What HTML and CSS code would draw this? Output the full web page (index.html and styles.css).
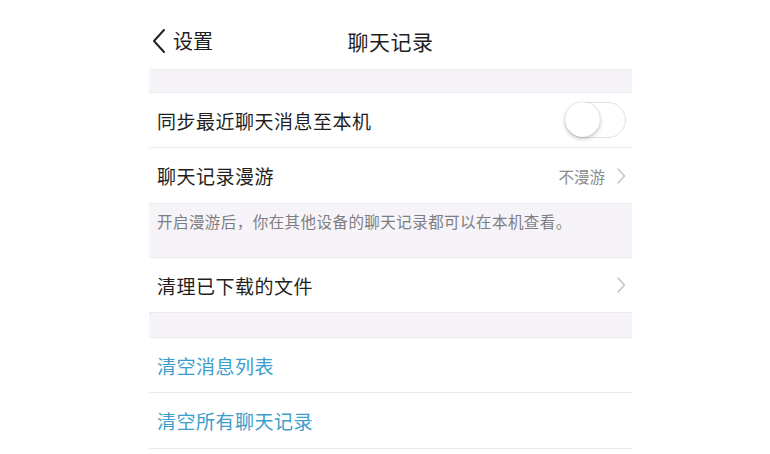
FILE: index.html
```html
<!DOCTYPE html>
<html lang="zh">
<head>
<meta charset="utf-8">
<link rel="stylesheet" href="styles.css">
</head>
<body>
<div class="panel">
  <header class="nav">
    <div class="back">
      <svg class="back-icon" width="14" height="26" viewBox="0 0 14 26"><path d="M12 2 L2 13 L12 24" fill="none" stroke="#222" stroke-width="2" stroke-linecap="round" stroke-linejoin="round"/></svg>
      <span>设置</span>
    </div>
    <div class="title">聊天记录</div>
  </header>
  <div class="gap"></div>
  <div class="group">
    <div class="row"><span class="label">同步最近聊天消息至本机</span><span class="toggle"><span class="knob"></span></span></div>
    <div class="row tall"><span class="label">聊天记录漫游</span><span class="value">不漫游</span><svg class="chev" width="10" height="18" viewBox="0 0 10 18"><path d="M2 2 L8.5 9 L2 16" fill="none" stroke="#c4c4c8" stroke-width="1.6" stroke-linecap="round" stroke-linejoin="round"/></svg></div>
  </div>
  <div class="note">开启漫游后，你在其他设备的聊天记录都可以在本机查看。</div>
  <div class="group">
    <div class="row"><span class="label">清理已下载的文件</span><svg class="chev" width="10" height="18" viewBox="0 0 10 18"><path d="M2 2 L8.5 9 L2 16" fill="none" stroke="#c4c4c8" stroke-width="1.6" stroke-linecap="round" stroke-linejoin="round"/></svg></div>
  </div>
  <div class="gap gap2"></div>
  <div class="group">
    <div class="row"><span class="label blue">清空消息列表</span></div>
    <div class="row tall"><span class="label blue">清空所有聊天记录</span></div>
  </div>
</div>
</body>
</html>
```
FILE: styles.css
```css
html, body {
  margin: 0;
  padding: 0;
  background: #ffffff;
}
body {
  font-family: "Noto Sans CJK SC", "Noto Sans", sans-serif;
  color: #1f1f1f;
}
.panel {
  width: 483px;
  margin-left: 149px;
}
.nav {
  position: relative;
  height: 69px;
  display: flex;
  align-items: center;
  justify-content: center;
  background: #fff;
}
.back {
  position: absolute;
  left: 3px;
  top: 27px;
  display: flex;
  align-items: center;
  gap: 7px;
  font-size: 20px;
  line-height: 28px;
}
.back-icon {
  display: block;
}
.title {
  font-size: 21px;
  line-height: 28px;
  margin-top: 13px;
  letter-spacing: 0.5px;
}
.gap {
  height: 24px;
  box-sizing: border-box;
  background: #f7f4f9;
  border-top: 1px solid #f1ecf4;
  border-bottom: 1px solid #ece8f0;
}
.gap2 {
  height: 25px;
  border-top: none;
}
.group {
  background: #fff;
}
.row {
  height: 55px;
  display: flex;
  align-items: center;
  padding: 0 6px 0 8px;
  border-bottom: 1px solid #ece8f0;
  box-sizing: border-box;
}
.row.tall {
  height: 56px;
}
.label {
  flex: 1;
  font-size: 19px;
  letter-spacing: 0.5px;
}
.label.blue {
  color: #3d9dcc;
}
.value {
  font-size: 15.5px;
  color: #8a8a8e;
  margin-right: 11px;
}
.chev {
  display: block;
}
.toggle {
  width: 61px;
  height: 36px;
  box-sizing: border-box;
  border: 1.5px solid #e3e1e6;
  border-radius: 18px;
  position: relative;
  background: #fff;
}
.knob {
  position: absolute;
  left: -1px;
  top: -1px;
  width: 35px;
  height: 35px;
  border-radius: 50%;
  background: #fff;
  box-shadow: 0 2px 4px rgba(0,0,0,0.22), 0 0 1px rgba(0,0,0,0.25);
}
.note {
  height: 54px;
  background: #f7f4f9;
  box-sizing: border-box;
  padding: 6px 8px 0;
  font-size: 15.5px;
  letter-spacing: 0.45px;
  color: #7e7e82;
  border-bottom: 1px solid #ece8f0;
}
```
